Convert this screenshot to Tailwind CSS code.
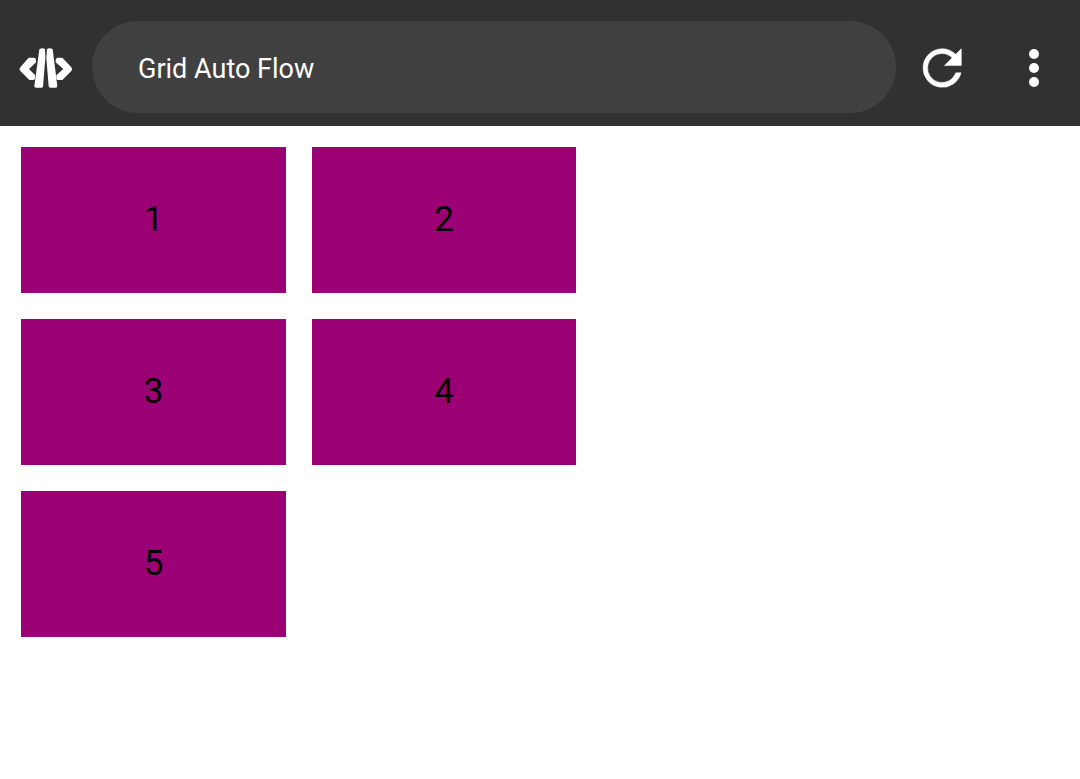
<!DOCTYPE html>
<html lang="en">
<head>
<meta charset="utf-8">
<meta name="viewport" content="width=device-width, initial-scale=1">
<title>Grid Auto Flow</title>
<script src="https://cdn.jsdelivr.net/npm/@tailwindcss/browser@4"></script>
</head>
<body class="min-h-screen bg-white font-[Roboto,sans-serif] text-black">
<header class="flex items-center bg-[#313131] pt-[21px] pr-[18px] pb-[13px] pl-[10px] text-white">
  <svg class="h-[60px] w-[72px] shrink-0" viewBox="0 -4 216 180" fill="#fff" aria-hidden="true">
    <path d="M56 58H71Q78 58 78 65V72L57 92L75 110V119Q75 125 69 125H58L31 98Q26 92 31 87Z"/>
    <path d="M141 58H157L184 87Q189 92 184 98L157 125H144Q139 125 139 119V111L160 92L137 72V64Z"/>
    <path d="M88 33Q97 27 105 32L106 60L99 145Q98 148 94 148H78Q73 148 73 143Z"/>
    <path d="M111 32Q119 27 128 33L142 143Q142 148 137 148H121Q117 148 116 144L109 60Z"/>
  </svg>
  <input type="text" value="Grid Auto Flow" aria-label="Page address" class="ml-[10px] h-[92px] min-w-0 flex-1 rounded-full bg-[#404040] px-[46px] pt-1 text-[27px] text-white outline-none">
  <button type="button" aria-label="Reload" class="ml-[17px] shrink-0 pt-0.5">
    <svg class="size-[58px]" viewBox="0 0 24 24" fill="#fff"><path d="M17.65 6.35A7.96 7.96 0 0 0 12 4a8 8 0 1 0 7.9 10h-2.2A6 6 0 1 1 12 6c1.66 0 3.14.69 4.22 1.78L13 11h7V4z" stroke="#fff" stroke-width=".2"/></svg>
  </button>
  <button type="button" aria-label="More options" class="ml-[35px] shrink-0">
    <svg class="size-[56px]" viewBox="0 0 56 56" fill="#fff"><circle cx="28" cy="15" r="5"/><circle cx="28" cy="29" r="5"/><circle cx="28" cy="43" r="5"/></svg>
  </button>
</header>
<main class="grid auto-rows-[146px] grid-cols-[265px_264px] gap-[26px] p-[21px] text-[35px]">
  <div class="flex items-center justify-center bg-[#9b0075]">1</div>
  <div class="flex items-center justify-center bg-[#9b0075]">2</div>
  <div class="flex items-center justify-center bg-[#9b0075]">3</div>
  <div class="flex items-center justify-center bg-[#9b0075]">4</div>
  <div class="flex items-center justify-center bg-[#9b0075]">5</div>
</main>
</body>
</html>
